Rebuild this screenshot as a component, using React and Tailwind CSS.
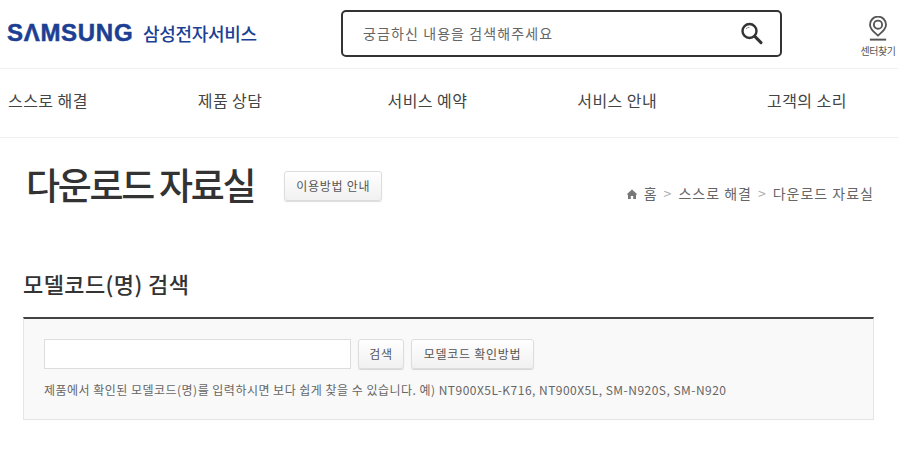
import React from "react";

const KR = { fontFamily: '"Noto Sans CJK KR", "Noto Sans", sans-serif' };

function SearchIcon() {
  return (
    <svg width="24" height="24" viewBox="0 0 24 24" fill="none" stroke="#333" strokeWidth="2.4">
      <circle cx="10.5" cy="10" r="7" />
      <path d="M15.8 15.4 L22 21.6" strokeWidth="3" strokeLinecap="round" />
      <path d="M7 8 Q8.5 6.3 10.5 6.2" strokeWidth="1" stroke="#888" />
    </svg>
  );
}

function PinIcon() {
  return (
    <svg width="22" height="26" viewBox="0 0 20 24" fill="none" stroke="#555" strokeWidth="1.7">
      <path d="M10 18 C7 15.4 2.6 12.4 2.6 8 A7.4 7.4 0 0 1 17.4 8 C17.4 12.4 13 15.4 10 18 Z" />
      <circle cx="10" cy="8" r="3.8" />
      <path d="M2.5 21.8 H17.5" strokeWidth="1.8" />
    </svg>
  );
}

function HomeIcon() {
  return (
    <svg width="12" height="12" viewBox="0 0 12 12" fill="#777">
      <path d="M6 1.5 L11.5 6.5 H10 V11 H7.2 V8 H4.8 V11 H2 V6.5 H0.5 Z" />
    </svg>
  );
}

const Btn = ({ children, className = "" }) => (
  <button className={"h-[30px] rounded-[3px] border border-[#ddd] bg-gradient-to-b from-white to-[#f1f1f1] text-[12px] text-[#555] tracking-[0.7px] shadow-[0_1px_1px_rgba(0,0,0,0.14)] " + className}>
    {children}
  </button>
);

export default function App() {
  return (
    <div className="w-[898px] h-[450px] overflow-hidden bg-white" style={KR}>
      <header className="flex h-[69px] items-center border-b border-[#f1f1f1]">
        <div className="flex w-[341px] items-center pl-[7px] pb-[3px]">
          <span className="w-[128px] text-[24px] leading-none font-bold tracking-[0.7px] text-[#1c3f94] [-webkit-text-stroke:0.5px_#1c3f94]" style={{ fontFamily: '"Liberation Sans", sans-serif' }}>SΛMSUNG</span>
          <span className="ml-[8px] text-[18px] leading-none font-medium tracking-[-0.3px] text-[#1c3f94]">삼성전자서비스</span>
        </div>
        <div className="flex h-[47px] w-[441px] items-center justify-between rounded-[5px] border-2 border-[#333] pl-[20px] pr-[17px] mb-[2px]">
          <span className="text-[14px] tracking-[1.1px] text-[#666]">궁금하신 내용을 검색해주세요</span>
          <SearchIcon />
        </div>
        <div className="ml-[76px] flex w-[40px] flex-col items-center pt-[3px]">
          <PinIcon />
          <span className="mt-[4px] text-[10px] leading-none tracking-[-0.4px] text-[#555]">센터찾기</span>
        </div>
      </header>

      <nav className="grid h-[69px] grid-cols-[repeat(4,189.75px)_1fr] items-center border-b border-[#eee] pl-2 pb-[7px] text-[16px] tracking-[0.45px] text-[#444]">
        <span>스스로 해결</span>
        <span>제품 상담</span>
        <span>서비스 예약</span>
        <span>서비스 안내</span>
        <span>고객의 소리</span>
      </nav>

      <main className="pl-[23px] pr-6">
        <div className="flex h-[94px] items-center pt-1">
          <h1 className="pl-[3px] mb-[6px] text-[37px] leading-none font-medium tracking-[-2.3px] text-[#333]">다운로드 자료실</h1>
          <Btn className="ml-[30px] w-[98px] mb-[3px]">이용방법 안내</Btn>
          <div className="ml-auto mt-[13px] flex items-center gap-[6px] text-[14px] tracking-[1px] text-[#666]">
            <HomeIcon />
            <span>홈</span>
            <span className="text-[#aaa]">&gt;</span>
            <span>스스로 해결</span>
            <span className="text-[#aaa]">&gt;</span>
            <span>다운로드 자료실</span>
          </div>
        </div>

        <h2 className="mt-[37px] text-[22px] leading-[28px] font-medium tracking-[0.4px] text-[#333]">모델코드(명) 검색</h2>

        <section className="mt-[20px] h-[103px] border border-t-2 border-[#e5e5e5] border-t-[#444] bg-[#f9f9f9] pl-5 pt-[20px]">
          <div className="flex items-center">
            <div className="h-[30px] w-[307px] border border-[#ddd] bg-white" />
            <Btn className="ml-[7px] w-[46px]">검색</Btn>
            <Btn className="ml-[7px] w-[123px]">모델코드 확인방법</Btn>
          </div>
          <p className="mt-[13px] text-[12px] leading-[16px] tracking-[0.48px] text-[#666]">
            제품에서 확인된 모델코드(명)를 입력하시면 보다 쉽게 찾을 수 있습니다. 예) NT900X5L-K716, NT900X5L, SM-N920S, SM-N920
          </p>
        </section>
      </main>
    </div>
  );
}
